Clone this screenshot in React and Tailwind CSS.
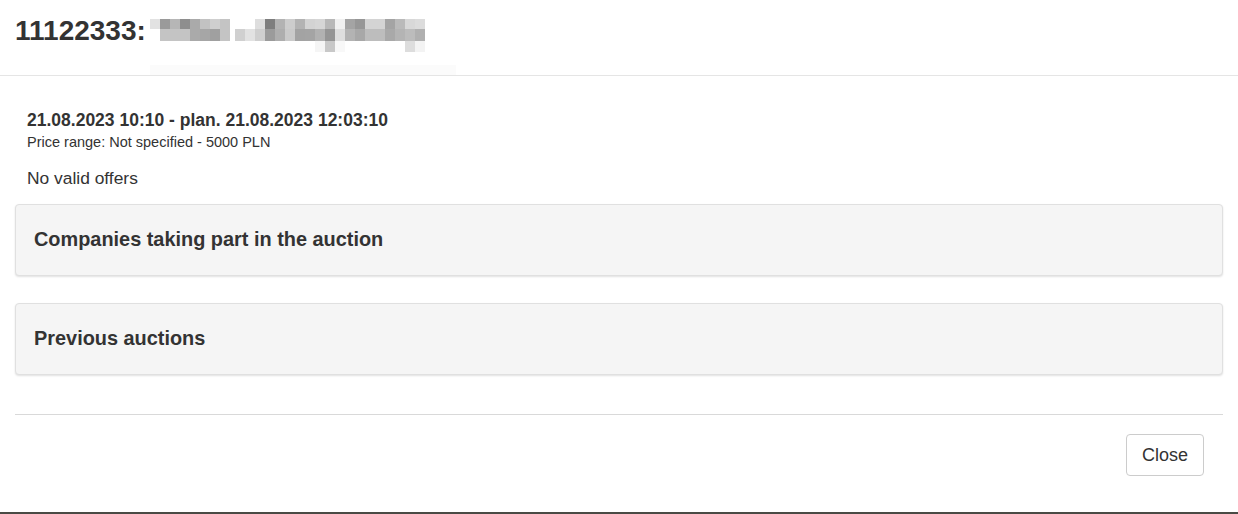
import React from 'react';

const mosaic = [
  // [x, y, w, h, shade]
  [0, 0, 10, 10, '#e2e2e2'], [10, 0, 10, 10, '#9a9a9a'], [20, 0, 10, 10, '#b6b6b6'], [30, 0, 10, 10, '#8e8e8e'], [40, 0, 10, 10, '#aaaaaa'], [50, 0, 10, 10, '#c2c2c2'], [60, 0, 10, 10, '#cfcfcf'], [70, 0, 10, 10, '#c4c4c4'],
  [10, 10, 10, 12, '#c4c4c4'], [20, 10, 10, 12, '#c4c4c4'], [30, 10, 10, 12, '#c4c4c4'], [40, 10, 10, 12, '#aaaaaa'], [50, 10, 10, 12, '#a6a6a6'], [60, 10, 10, 12, '#a0a0a0'], [70, 10, 10, 12, '#c4c4c4'],
  [95, 0, 10, 10, '#ffffff'], [105, 0, 10, 10, '#dedede'], [115, 0, 10, 10, '#7e7e7e'], [125, 0, 10, 10, '#b3b3b3'], [135, 0, 10, 10, '#cdcdcd'], [145, 0, 10, 10, '#b3b3b3'], [155, 0, 10, 10, '#d3d3d3'], [165, 0, 10, 10, '#d6d6d6'], [175, 0, 10, 10, '#b8b8b8'], [185, 0, 10, 10, '#f0f0f0'], [195, 0, 10, 10, '#a4a4a4'], [205, 0, 10, 10, '#979797'], [215, 0, 10, 10, '#d4d4d4'], [225, 0, 10, 10, '#d4d4d4'], [235, 0, 10, 10, '#a4a4a4'], [245, 0, 10, 10, '#bababa'], [255, 0, 10, 10, '#d8d8d8'], [265, 0, 10, 10, '#dcdcdc'],
  [85, 10, 10, 12, '#d0d0d0'], [95, 10, 10, 12, '#e2e2e2'], [105, 10, 10, 12, '#cfcfcf'], [115, 10, 10, 12, '#9b9b9b'], [125, 10, 10, 12, '#aeaeae'], [135, 10, 10, 12, '#cacaca'], [145, 10, 10, 12, '#a3a3a3'], [155, 10, 10, 12, '#a4a4a4'], [165, 10, 10, 12, '#b1b1b1'], [175, 10, 10, 12, '#959595'], [185, 10, 10, 12, '#dedede'], [195, 10, 10, 12, '#b3b3b3'], [205, 10, 10, 12, '#a8a8a8'], [215, 10, 10, 12, '#bdbdbd'], [225, 10, 10, 12, '#bdbdbd'], [235, 10, 10, 12, '#a9a9a9'], [245, 10, 10, 12, '#b4b4b4'], [255, 10, 10, 12, '#bcbcbc'], [265, 10, 10, 12, '#b0b0b0'],
  [165, 22, 10, 11, '#f5f5f5'], [175, 22, 10, 11, '#c8c8c8'], [185, 22, 10, 11, '#f8f8f8'], [255, 22, 10, 11, '#dddddd'], [265, 22, 10, 11, '#f3f3f3'],
];

function Mosaic() {
  return (
    <svg width="276" height="34" viewBox="0 0 276 34" className="block">
      {mosaic.map(([x, y, w, h, c], i) => (
        <rect key={i} x={x} y={y} width={w} height={h} fill={c} />
      ))}
    </svg>
  );
}

function Panel({ title }) {
  return (
    <div className="h-[72px] bg-[#f5f5f5] border border-[#e0e0e0] rounded-[4px] shadow-[0_1px_2px_rgba(0,0,0,0.12)] flex items-center px-[18px]">
      <h3 className="text-[19.9px] font-bold text-[#333]">{title}</h3>
    </div>
  );
}

export default function App() {
  return (
    <div className="w-[1238px] h-[514px] bg-white flex flex-col text-[#333] font-['Liberation_Sans',Arial,sans-serif] border-b-2 border-[#4a4a44]">
      <div className="h-[76px] border-b border-[#e5e5e5] flex items-start pl-[15px] pt-[14px]">
        <h2 className="text-[28px] font-bold leading-[34px] text-[#333]">11122333:</h2>
        <div className="flex flex-col ml-[4px] pt-[5px]">
          <Mosaic />
          <div className="h-[10px] w-[306px] bg-[#fbfbfb] mt-[12px]" />
        </div>
      </div>

      <div className="px-[15px] pt-[33px]">
        <div className="pl-[12px]">
          <div className="text-[17.5px] font-bold leading-[22px]">21.08.2023 10:10 - plan. 21.08.2023 12:03:10</div>
          <div className="text-[14.5px] leading-[20px] mt-[1px]">Price range: Not specified - 5000 PLN</div>
          <div className="text-[17.4px] leading-[22px] mt-[15px]">No valid offers</div>
        </div>
        <div className="mt-[15px] flex flex-col gap-[27px]">
          <Panel title="Companies taking part in the auction" />
          <Panel title="Previous auctions" />
        </div>
        <div className="mt-[39px] border-t border-[#d9d9d9] pt-[19px] flex justify-end pr-[19px]">
          <button className="h-[42px] px-[15px] border border-[#ccc] rounded-[4px] bg-white text-[18px] text-[#333]">
            Close
          </button>
        </div>
      </div>
    </div>
  );
}
